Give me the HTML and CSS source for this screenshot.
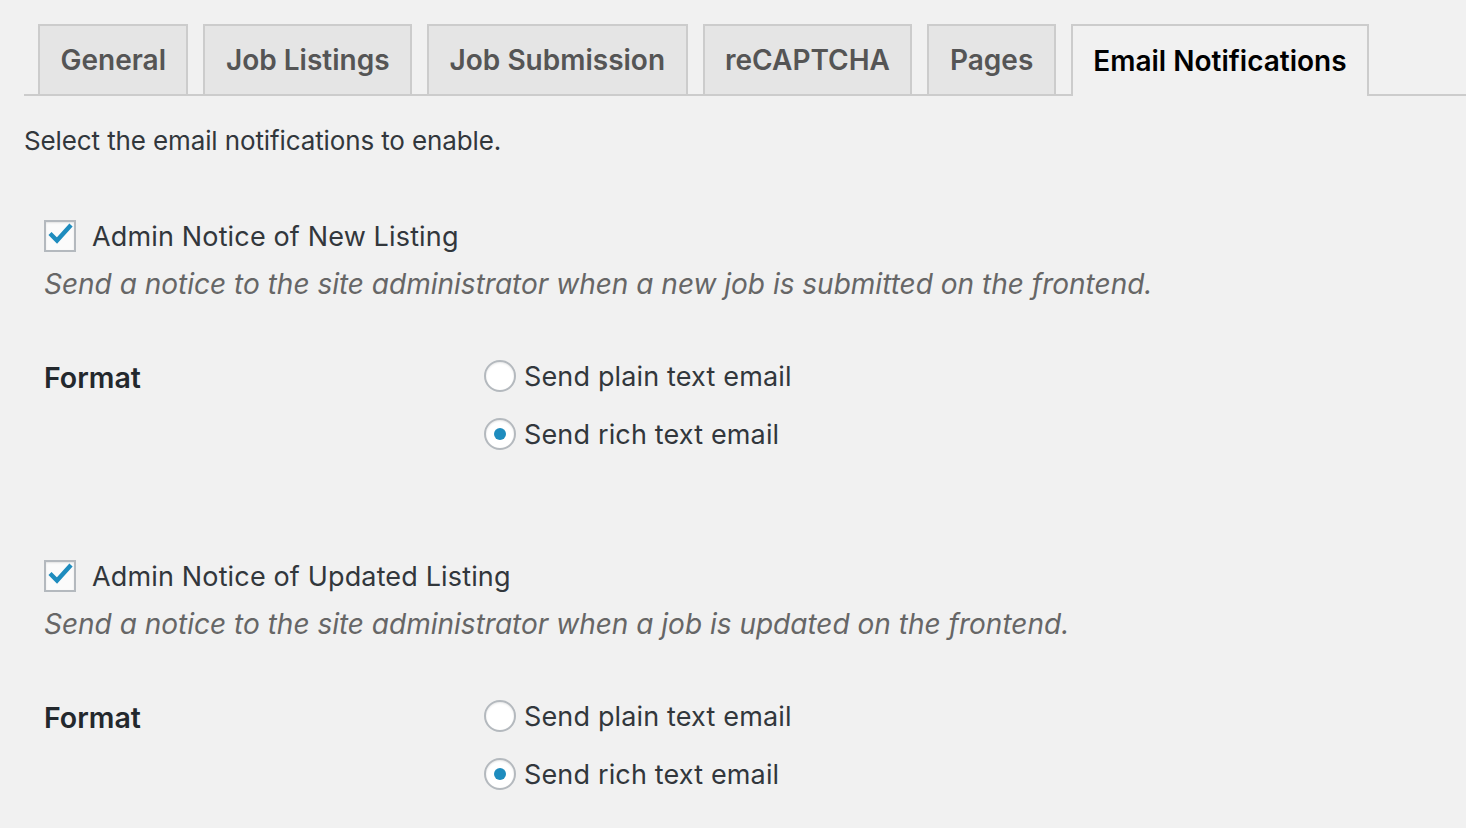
FILE: index.html
```html
<!DOCTYPE html>
<html>
<head>
<meta charset="utf-8">
<link rel="stylesheet" href="styles.css">
</head>
<body>
<div class="wrap">
  <nav class="tabs">
    <a class="tab">General</a>
    <a class="tab">Job Listings</a>
    <a class="tab">Job Submission</a>
    <a class="tab">reCAPTCHA</a>
    <a class="tab">Pages</a>
    <a class="tab active">Email Notifications</a>
  </nav>
  <p class="intro">Select the email notifications to enable.</p>

  <section class="notice">
    <label class="check-row">
      <span class="checkbox"><svg viewBox="0 0 28 28" width="28" height="28"><path d="M4 11.5 L11 18.5 L25 3" fill="none" stroke="#1e8cbe" stroke-width="4.4" stroke-linecap="butt" stroke-linejoin="miter"/></svg></span>
      <span class="check-label">Admin Notice of New Listing</span>
    </label>
    <p class="desc">Send a notice to the site administrator when a new job is submitted on the frontend.</p>
    <div class="format">
      <div class="format-label">Format</div>
      <div class="radios">
        <label class="radio-row"><span class="radio"></span><span>Send plain text email</span></label>
        <label class="radio-row"><span class="radio on"></span><span>Send rich text email</span></label>
      </div>
    </div>
  </section>

  <section class="notice">
    <label class="check-row">
      <span class="checkbox"><svg viewBox="0 0 28 28" width="28" height="28"><path d="M4 11.5 L11 18.5 L25 3" fill="none" stroke="#1e8cbe" stroke-width="4.4" stroke-linecap="butt" stroke-linejoin="miter"/></svg></span>
      <span class="check-label">Admin Notice of Updated Listing</span>
    </label>
    <p class="desc">Send a notice to the site administrator when a job is updated on the frontend.</p>
    <div class="format">
      <div class="format-label">Format</div>
      <div class="radios">
        <label class="radio-row"><span class="radio"></span><span>Send plain text email</span></label>
        <label class="radio-row"><span class="radio on"></span><span>Send rich text email</span></label>
      </div>
    </div>
  </section>
</div>
</body>
</html>
```
FILE: styles.css
```css
html, body {
  margin: 0;
  padding: 0;
  background: #f1f1f1;
}
body {
  font-family: Inter, "Noto Sans", sans-serif;
  color: #32373c;
  font-size: 26px;
  width: 1466px;
  height: 828px;
  overflow: hidden;
}
.wrap {
  padding: 24px 0 0 24px;
}
.tabs {
  display: flex;
  gap: 15px;
  padding-left: 14px;
  border-bottom: 2px solid #ccc;
  height: 70px;
}
.tab {
  display: flex;
  align-items: center;
  padding: 0 20.5px;
  height: 68px;
  border: 2px solid #ccc;
  border-bottom: none;
  background: #e5e5e5;
  color: #555;
  font-size: 28px;
  font-weight: 600;
}
.tab.active {
  background: #f1f1f1;
  color: #000;
  height: 70px;
  margin-bottom: -2px;
}
.intro {
  margin: 25px 0 0;
  line-height: 40px;
  letter-spacing: -0.12px;
}
.notice {
  padding-left: 20px;
}
.check-row {
  display: flex;
  align-items: center;
  gap: 16px;
  height: 32px;
  margin-top: 59px;
}
.notice + .notice .check-row {
  margin-top: 106px;
}
.checkbox {
  width: 28px;
  height: 28px;
  border: 2px solid #b4b9be;
  background: #fbfbfb;
  display: flex;
  align-items: center;
  justify-content: center;
  box-shadow: inset 0 1px 2px rgba(0,0,0,0.1);
}
.checkbox svg {
  width: 28px;
  height: 28px;
}
.check-label {
  font-size: 27px;
  letter-spacing: 0.15px;
}
.desc {
  margin: 12px 0 0;
  line-height: 40px;
  font-size: 28px;
  font-style: italic;
  color: #666;
}
.format {
  display: flex;
  margin-top: 52px;
}
.format-label {
  width: 440px;
  font-size: 28.5px;
  font-weight: 600;
  color: #23282d;
  line-height: 40px;
  padding-top: 2px;
}
.radios {
  display: flex;
  flex-direction: column;
  gap: 18px;
}
.radio-row {
  display: flex;
  align-items: center;
  gap: 8px;
  height: 40px;
  font-size: 27px;
  letter-spacing: 0.15px;
}
.radio {
  width: 28px;
  height: 28px;
  border: 2px solid #b4b9be;
  border-radius: 50%;
  background: #fff;
  display: flex;
  align-items: center;
  justify-content: center;
  box-shadow: inset 0 1px 2px rgba(0,0,0,0.1);
}
.radio.on::after {
  content: "";
  width: 12px;
  height: 12px;
  border-radius: 50%;
  background: #1e8cbe;
}
```
